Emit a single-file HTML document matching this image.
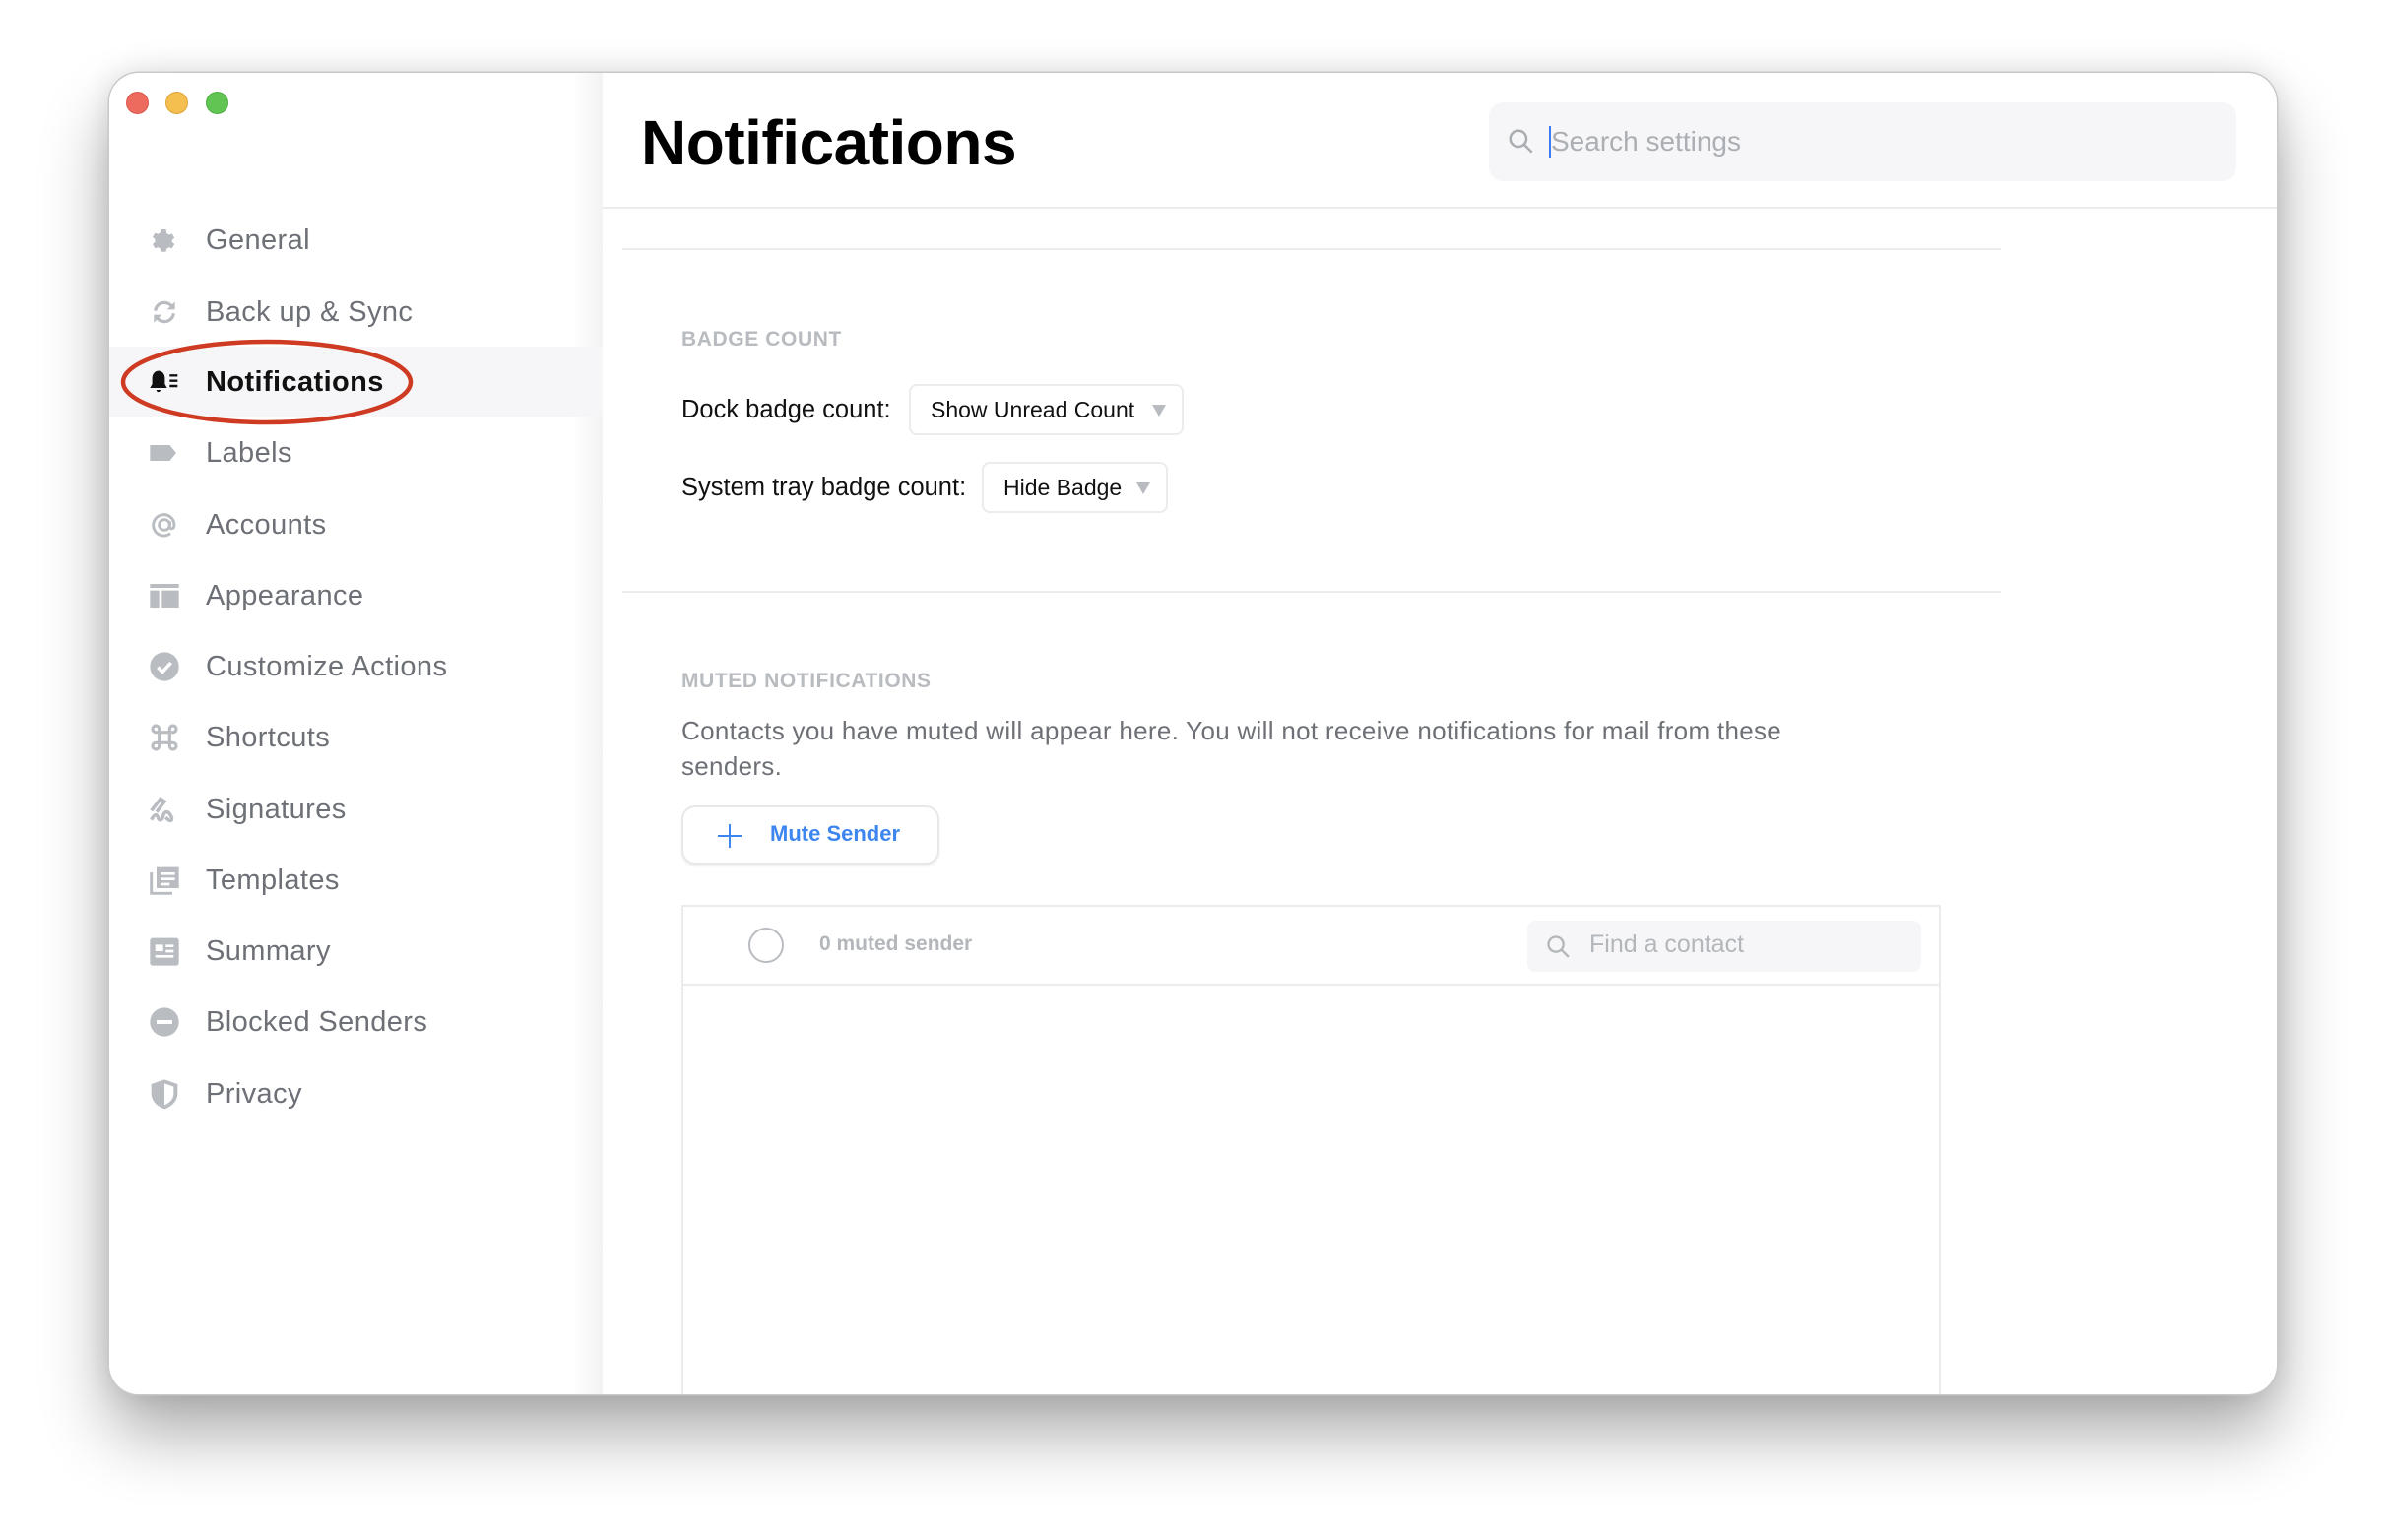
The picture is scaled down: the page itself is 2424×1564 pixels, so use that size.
<!DOCTYPE html>
<html><head><meta charset="utf-8"><style>
*{margin:0;padding:0;box-sizing:border-box}
body{width:2424px;height:1564px;background:#fff;font-family:"Liberation Sans",sans-serif;position:relative;overflow:hidden}
.win{position:absolute;left:111px;top:74px;width:2201px;height:1342px;background:#fff;border-radius:30px;box-shadow:0 0 0 1.5px #c9c9c9,0 40px 70px rgba(0,0,0,.33),0 0 30px rgba(0,0,0,.12);overflow:hidden}
.tl{position:absolute;top:19px;width:23px;height:23px;border-radius:50%}
.side{position:absolute;left:0;top:0;width:501px;height:100%;background:linear-gradient(90deg,#fff 0,#fff 470px,#f3f3f3 501px)}
.sel{position:absolute;left:0;top:278px;width:501px;height:71px;background:#f6f6f8}
.item{position:absolute;left:98px;font-size:29px;color:#6d7076;letter-spacing:.4px;line-height:40px;height:40px}
.item svg{position:absolute;left:-58px;top:4px;width:32px;height:32px}
.item.b{color:#111;font-weight:bold}
.main{position:absolute;left:501px;top:0;right:0;height:100%}
.abs{position:absolute}
.sec{font-size:21px;color:#b8bbbf;font-weight:bold;letter-spacing:.6px}
.lbl{font-size:25.5px;color:#111;line-height:52px}
.selb{position:absolute;border:2px solid #ececee;border-radius:8px;background:#fff;font-size:23px;color:#111;line-height:48px;padding-left:20px}
.tri{position:absolute;right:16px;top:19px;width:0;height:0;border-left:7px solid transparent;border-right:7px solid transparent;border-top:12px solid #b8bbbf}
</style></head><body>
<div class="win">
 <div class="side">
  <div class="tl" style="left:17px;background:#ec6a5e;border:1px solid #d8574b"></div>
  <div class="tl" style="left:57px;background:#f4bf4f;border:1px solid #dca53a"></div>
  <div class="tl" style="left:98px;background:#61c554;border:1px solid #4fae42"></div>
  <div class="sel"></div>
  <div class="item" style="top:150px"><svg viewBox="0 0 24 24"><path fill="#b9bdc2" d="M12 8.5a3.5 3.5 0 1 0 0 7 3.5 3.5 0 0 0 0-7zm8.6 5l2-1.6-2-3.4-2.4.9a8 8 0 0 0-2-1.2L15.8 5h-4l-.4 2.6c-.7.3-1.4.7-2 1.2l-2.4-.9-2 3.4 2 1.6a8 8 0 0 0 0 2.3l-2 1.6 2 3.4 2.4-.9c.6.5 1.3.9 2 1.2l.4 2.5h4l.4-2.5c.7-.3 1.4-.7 2-1.2l2.4.9 2-3.4-2-1.6a8 8 0 0 0 0-2.3z" transform="translate(-1.8 -1) scale(.95)"/></svg>General</div>
  <div class="item" style="top:223px"><svg viewBox="0 0 24 24" fill="none" stroke="#b9bdc2" stroke-width="2.4"><path d="M5 11a7 7 0 0 1 12.5-3.5M19 13a7 7 0 0 1-12.5 3.5"/><path fill="#b9bdc2" stroke="none" d="M20 4v6h-6zM4 20v-6h6z"/></svg>Back up &amp; Sync</div>
  <div class="item b" style="top:294px"><svg viewBox="0 0 24 24"><path fill="#111" d="M7 3.5c-2.8.5-4.3 2.8-4.3 5.5v4.5L1 16.5h13l-1.7-3V9c0-2.7-1.5-5-4.3-5.5zM5.8 18h3.2a1.6 1.6 0 0 1-3.2 0z"/><path stroke="#111" stroke-width="1.8" d="M16 7h6M16 11h6M16 15h6"/></svg>Notifications</div>
  <div class="item" style="top:366px"><svg viewBox="0 0 24 24"><path fill="#b9bdc2" d="M1 6h15l5 6-5 6H1z"/></svg>Labels</div>
  <div class="item" style="top:439px"><svg viewBox="0 0 24 24" fill="none" stroke="#b9bdc2" stroke-width="2.2"><circle cx="12" cy="12" r="4"/><path d="M16 9v4.5c0 2 3.5 2 3.5-1.5a8 8 0 1 0-3 6.5"/></svg>Accounts</div>
  <div class="item" style="top:511px"><svg viewBox="0 0 24 24"><path fill="#b9bdc2" d="M1 3h22v3H1zM1 8h7v13H1zM10 8h13v13H10z"/></svg>Appearance</div>
  <div class="item" style="top:583px"><svg viewBox="0 0 24 24"><circle cx="12" cy="12" r="11" fill="#b9bdc2"/><path d="M7 12.5l3.5 3.5 6.5-7" stroke="#fff" stroke-width="2.6" fill="none"/></svg>Customize Actions</div>
  <div class="item" style="top:655px"><svg viewBox="0 0 24 24" fill="none" stroke="#b9bdc2" stroke-width="2.4"><path d="M8 8h8v8H8zM8 8V5.5A2.5 2.5 0 1 0 5.5 8H8M16 8V5.5A2.5 2.5 0 1 1 18.5 8H16M8 16v2.5A2.5 2.5 0 1 1 5.5 16H8M16 16v2.5a2.5 2.5 0 1 0 2.5-2.5H16"/></svg>Shortcuts</div>
  <div class="item" style="top:728px"><svg viewBox="0 0 24 24" fill="none" stroke="#b9bdc2" stroke-width="2.6"><path d="M2 13l7-9 3 2-6 8"/><path d="M2 20c2-4 4-5 5-2s3 3 4-1 4-4 6 0-1 5-4 1"/></svg>Signatures</div>
  <div class="item" style="top:800px"><svg viewBox="0 0 24 24"><path fill="none" stroke="#b9bdc2" stroke-width="2.2" d="M2 6v16h16"/><path fill="#b9bdc2" d="M6 2h17v16H6z"/><path stroke="#fff" stroke-width="2" d="M9 7h11M9 11h11M9 15h7"/></svg>Templates</div>
  <div class="item" style="top:872px"><svg viewBox="0 0 24 24"><rect x="1" y="2" width="22" height="21" rx="2" fill="#b9bdc2"/><path fill="#fff" d="M5 7h6v5H5zM13 7h6v2h-6zM13 11h6v2h-6zM5 15h14v2H5z"/></svg>Summary</div>
  <div class="item" style="top:944px"><svg viewBox="0 0 24 24"><circle cx="12" cy="12" r="11" fill="#b9bdc2"/><path stroke="#fff" stroke-width="3" d="M6 12h12"/></svg>Blocked Senders</div>
  <div class="item" style="top:1017px"><svg viewBox="0 0 24 24"><path fill="#b9bdc2" d="M12 1l10 3.5v7c0 6-4.5 10-10 12C6.5 21.5 2 17.5 2 11.5v-7z"/><path fill="#fff" d="M12 4l7 2.5v5c0 4.5-3 7.3-7 9z"/></svg>Privacy</div>
  <svg class="abs" style="left:10px;top:268px" width="300" height="92"><ellipse cx="150" cy="46" rx="146" ry="41" fill="none" stroke="#cf3b22" stroke-width="4.5"/></svg>
 </div>
 <div class="main">
  <div class="abs" style="left:39px;top:33px;font-size:64px;font-weight:bold;color:#000;letter-spacing:-.5px;line-height:76px">Notifications</div>
  <div class="abs" style="left:900px;top:30px;width:759px;height:80px;background:#f6f6f8;border-radius:14px">
   <svg class="abs" style="left:18px;top:25px" width="30" height="30" viewBox="0 0 24 24" fill="none" stroke="#a9acb1" stroke-width="2"><circle cx="9.5" cy="9.5" r="6.5"/><path d="M14.5 14.5l6 6"/></svg>
   <div class="abs" style="left:61px;top:24px;width:2px;height:32px;background:#3a7bef"></div>
   <div class="abs" style="left:63px;top:22px;font-size:28px;color:#abaeb3;line-height:36px">Search settings</div>
  </div>
  <div class="abs" style="left:0;top:136px;width:1700px;height:2px;background:#ececee"></div>
  <div class="abs" style="left:20px;top:178px;width:1400px;height:2px;background:#ececee"></div>
  <div class="abs sec" style="left:80px;top:259px">BADGE COUNT</div>
  <div class="abs lbl" style="left:80px;top:316px">Dock badge count:</div>
  <div class="selb" style="left:311px;top:316px;width:279px;height:52px">Show Unread Count<div class="tri"></div></div>
  <div class="abs lbl" style="left:80px;top:395px">System tray badge count:</div>
  <div class="selb" style="left:385px;top:395px;width:189px;height:52px">Hide Badge<div class="tri"></div></div>
  <div class="abs" style="left:20px;top:526px;width:1400px;height:2px;background:#ececee"></div>
  <div class="abs sec" style="left:80px;top:606px">MUTED NOTIFICATIONS</div>
  <div class="abs" style="left:80px;top:650px;width:1185px;font-size:26px;line-height:36px;color:#6d7076;letter-spacing:.3px">Contacts you have muted will appear here. You will not receive notifications for mail from these senders.</div>
  <div class="abs" style="left:80px;top:744px;width:262px;height:60px;border:2px solid #e8e8ea;border-radius:14px;box-shadow:0 2px 2px rgba(0,0,0,.06);background:#fff">
   <svg class="abs" style="left:35px;top:17px" width="24" height="24"><path d="M12 0v24M0 12h24" stroke="#3d86f0" stroke-width="2"/></svg>
   <div class="abs" style="left:88px;top:14px;font-size:22px;font-weight:bold;color:#3d86f0">Mute Sender</div>
  </div>
  <div class="abs" style="left:80px;top:845px;width:1279px;height:560px;border:2px solid #ebebed;border-bottom:none">
   <div class="abs" style="left:0;top:78px;width:100%;height:2px;background:#ebebed"></div>
   <div class="abs" style="left:66px;top:21px;width:36px;height:36px;border:2.5px solid #b9bcc0;border-radius:50%"></div>
   <div class="abs" style="left:138px;top:26px;font-size:21px;font-weight:bold;color:#b3b6ba">0 muted sender</div>
   <div class="abs" style="left:857px;top:14px;width:400px;height:52px;background:#f6f6f8;border-radius:8px">
    <svg class="abs" style="left:18px;top:13px" width="28" height="28" viewBox="0 0 24 24" fill="none" stroke="#b3b6ba" stroke-width="2"><circle cx="9.5" cy="9.5" r="6.5"/><path d="M14.5 14.5l6 6"/></svg>
    <div class="abs" style="left:63px;top:10px;font-size:25px;color:#b3b6ba">Find a contact</div>
   </div>
  </div>
 </div>
</div>
</body></html>
